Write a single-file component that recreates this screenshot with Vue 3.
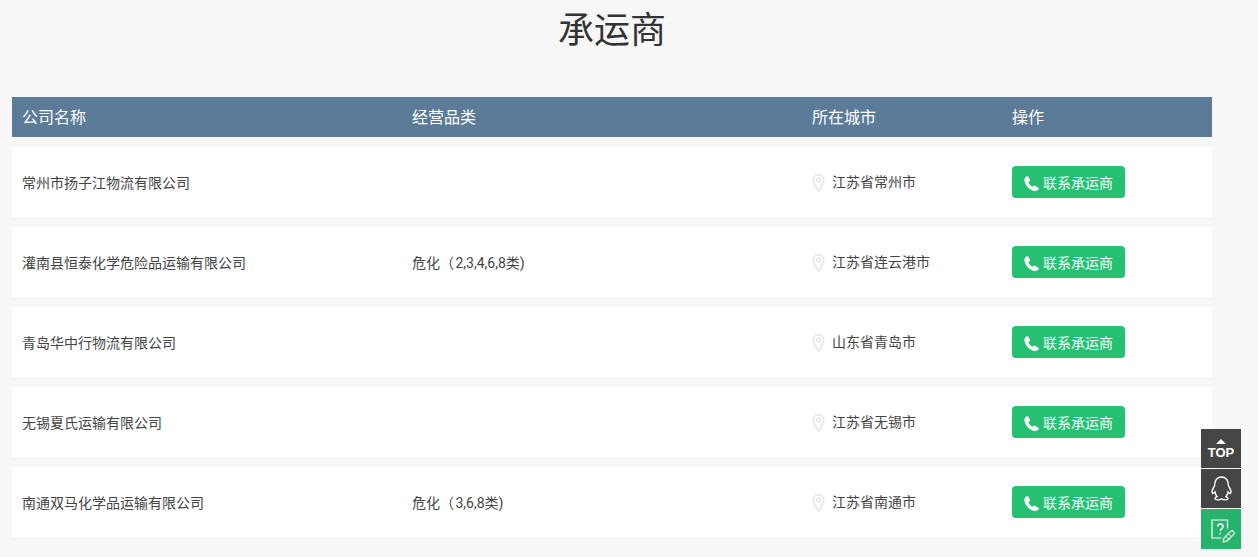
<script setup>
const rows = [
  { name: '常州市扬子江物流有限公司', cat: '', city: '江苏省常州市' },
  { name: '灌南县恒泰化学危险品运输有限公司', cat: '危化（ 2,3,4,6,8类)', city: '江苏省连云港市' },
  { name: '青岛华中行物流有限公司', cat: '', city: '山东省青岛市' },
  { name: '无锡夏氏运输有限公司', cat: '', city: '江苏省无锡市' },
  { name: '南通双马化学品运输有限公司', cat: '危化（ 3,6,8类)', city: '江苏省南通市' }
]
</script>

<template>
  <div class="page">
    <h1 class="title">承运商</h1>
    <div class="table">
      <div class="row head">
        <div class="first">公司名称</div>
        <div>经营品类</div>
        <div>所在城市</div>
        <div>操作</div>
      </div>
      <div v-for="r in rows" :key="r.name" class="row item">
        <div class="first">{{ r.name }}</div>
        <div class="cat">{{ r.cat }}</div>
        <div class="city">
          <svg class="pin" width="13" height="18" viewBox="0 0 14 20" fill="none" stroke="#d3e1ee" stroke-width="1.3">
            <path d="M7 1C3.6 1 1 3.6 1 7c0 4 4 8.500 6 12 2-3.500 6-8 6-12 0-3.400-2.600-6-6-6z" />
            <circle cx="7" cy="7" r="2.200" />
          </svg>
          <span class="city-name">{{ r.city }}</span>
        </div>
        <div>
          <a class="btn">
            <svg class="phone" width="15" height="15" viewBox="0 0 15 15" fill="#fff">
              <path d="M1.500 1C2.500 .2 3.800 0 4.500 .8L6 4C6.200 4.700 5.800 5.300 5 5.800L4.400 6.200C5 8 6.500 9.800 8.500 10.800L9.300 10C9.800 9.500 10.500 9.400 11 9.700L14.300 11.800C15 12.300 15 13 14.500 13.500C13.500 14.600 12 15.200 10.500 15C5 14 .8 9 .4 4C.3 2.800 .7 1.700 1.500 1Z" />
            </svg>
            <span>联系承运商</span>
          </a>
        </div>
      </div>
    </div>
    <div class="tools">
      <div class="tool dark top">
        <i class="arrow"></i>
        <b>TOP</b>
      </div>
      <div class="tool dark">
        <svg class="qq" width="21" height="25" viewBox="0 0 21 25" fill="none" stroke="#fff" stroke-width="1.400">
          <path d="M10.500 1C6 1 3.800 4.500 3.800 8C3.800 9.500 3.500 10.500 2.400 12C1.200 13.800 .8 16 1.500 17.500C2.500 17.500 3.200 17 4 16C4.300 18 5 19.500 6 20.500C4.500 21.200 3.800 22 4.200 23C5.500 24.200 8.500 24 10.500 22.800C12.500 24 15.500 24.200 16.800 23C17.200 22 16.500 21.200 15 20.500C16 19.500 16.700 18 17 16C17.800 17 18.500 17.500 19.500 17.500C20.200 16 19.800 13.800 18.600 12C17.500 10.500 17.200 9.500 17.200 8C17.200 4.500 15 1 10.500 1Z" />
        </svg>
      </div>
      <div class="tool green">
        <svg class="note" width="24" height="24" viewBox="0 0 24 24" fill="none" stroke="#fff" stroke-width="1.200">
          <path d="M16.500 9.500V1H1V19H10.500" />
          <path d="M6.500 7.500C6.800 5.800 8 5 9.300 5C10.800 5 12 6 12 7.400C12 9.500 9.300 9.700 9.300 12" stroke-width="1.500" />
          <path d="M9.300 13.500V15.300" stroke-width="1.500" />
          <path d="M12.300 23L13 19L19.500 12.300C20.300 11.500 21.500 11.500 22.500 12.400C23.500 13.300 23.500 14.500 22.700 15.300L16 22Z" />
          <path d="M15 17.500L18.500 21M17.500 15L21 18" stroke-width="1" />
        </svg>
      </div>
    </div>
  </div>
</template>

<style>
html, body { margin: 0; background: #f7f7f7; }
</style>

<style scoped>
.page {
  width: 1258px;
  height: 557px;
  overflow: hidden;
  background: #f7f7f7;
  font-family: "Noto Sans CJK SC", "Liberation Sans", sans-serif;
  color: #333;
  position: relative;
}
.title {
  margin: 0;
  padding-left: 12px;
  width: 1200px;
  height: 97px;
  font-size: 36px;
  font-weight: 400;
  line-height: 54px;
  text-align: center;
  color: #333;
}
.table {
  margin-left: 12px;
  width: 1200px;
  display: flex;
  flex-direction: column;
  gap: 10px;
}
.row {
  display: grid;
  grid-template-columns: 400px 400px 200px 200px;
  align-items: center;
}
.row > .first { padding-left: 10px; }
.head {
  height: 40px;
  padding-bottom: 2px;
  box-sizing: border-box;
  background: #5b7b98;
  color: #fff;
  font-size: 16px;
}
.item {
  height: 70px;
  background: #fff;
  font-size: 14px;
  color: #444;
}
.cat {
  font-family: Roboto, "Noto Sans CJK SC", sans-serif;
  word-spacing: -2px;
}
.city {
  display: flex;
  align-items: center;
  gap: 7px;
}
.city-name { margin-bottom: 2px; }
.pin { flex: none; margin-top: 1px; }
.btn {
  display: inline-flex;
  align-items: center;
  gap: 4px;
  width: 113px;
  height: 32px;
  padding-left: 12px;
  box-sizing: border-box;
  background: #26c072;
  border-radius: 4px;
  color: #fff;
  font-size: 14px;
}
.phone { flex: none; margin-top: 3px; }
.tools {
  position: absolute;
  left: 1201px;
  top: 429px;
  width: 40px;
  display: flex;
  flex-direction: column;
  gap: 1px;
}
.tool {
  height: 39px;
  display: flex;
  align-items: center;
  justify-content: center;
}
.tool.green { height: 40px; }
.dark { background: #454545; }
.green { background: #26b36b; }
.qq { margin-left: 1px; }
.note { margin: 4px 0 0 4px; }
.top {
  flex-direction: column;
  padding-top: 2px;
  box-sizing: border-box;
  color: #fff;
  font-family: "Liberation Sans", sans-serif;
}
.top b { font-size: 13px; line-height: 14px; }
.arrow {
  width: 0;
  height: 0;
  border-left: 5px solid transparent;
  border-right: 5px solid transparent;
  border-bottom: 5px solid #fff;
  margin-bottom: 2px;
}
</style>
